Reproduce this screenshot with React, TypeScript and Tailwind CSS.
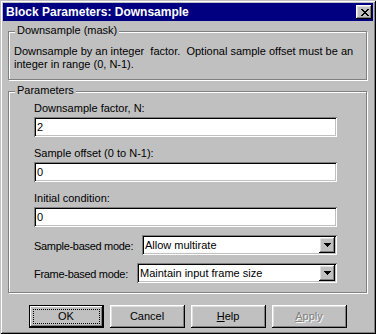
import React from "react";

const sunken =
  "shadow-[inset_1px_1px_0_#808080,inset_-1px_-1px_0_#ffffff,inset_2px_2px_0_#000000,inset_-2px_-2px_0_#c0c0c0]";
const raised =
  "shadow-[inset_-1px_-1px_0_#000000,inset_1px_1px_0_#ffffff,inset_-2px_-2px_0_#808080,inset_2px_2px_0_#dfdfdf]";

function CloseGlyph() {
  const rows = [
    "XX....XX",
    ".XX..XX.",
    "..XXXX..",
    "...XX...",
    "..XXXX..",
    ".XX..XX.",
    "XX....XX",
  ];
  return (
    <svg width="8" height="7" viewBox="0 0 8 7" shapeRendering="crispEdges">
      {rows.map((r, y) =>
        r.split("").map((c, x) =>
          c === "X" ? <rect key={`${x}-${y}`} x={x} y={y} width="1" height="1" fill="#000" /> : null
        )
      )}
    </svg>
  );
}

function Arrow() {
  return (
    <svg width="7" height="4" viewBox="0 0 7 4" shapeRendering="crispEdges">
      <rect x="0" y="0" width="7" height="1" fill="#000" />
      <rect x="1" y="1" width="5" height="1" fill="#000" />
      <rect x="2" y="2" width="3" height="1" fill="#000" />
      <rect x="3" y="3" width="1" height="1" fill="#000" />
    </svg>
  );
}

function Group({
  title,
  className,
  children,
}: {
  title: string;
  className: string;
  children: React.ReactNode;
}) {
  return (
    <div
      className={`relative border border-[#808080] shadow-[inset_1px_1px_0_#ffffff,1px_1px_0_#ffffff] ${className}`}
    >
      <span className="absolute left-[6px] top-[-8px] px-[2px] bg-[#c0c0c0] leading-[13px]">
        {title}
      </span>
      {children}
    </div>
  );
}

function Edit({ value }: { value: string }) {
  return (
    <div className={`h-[20px] bg-white ${sunken} flex items-center pl-[3px]`}>
      <span className="leading-[13px]">{value}</span>
    </div>
  );
}

function Combo({ value }: { value: string }) {
  return (
    <div className={`flex-1 h-[20px] bg-white ${sunken} flex items-center p-[2px]`}>
      <span className="flex-1 pl-[1px] leading-[13px]">{value}</span>
      <div className={`w-[16px] h-[16px] bg-[#c0c0c0] ${raised} flex items-center justify-center`}>
        <Arrow />
      </div>
    </div>
  );
}

function Btn({
  children,
  def,
}: {
  children: React.ReactNode;
  def?: boolean;
}) {
  if (def) {
    return (
      <div className="relative w-[75px] h-[23px] border border-black bg-[#c0c0c0] shadow-[inset_-1px_-1px_0_#000000,inset_1px_1px_0_#ffffff,inset_-2px_-2px_0_#808080] flex items-center justify-center">
        <div className="absolute left-[3px] top-[3px] right-[3px] bottom-[3px] border border-dotted border-black" />
        <span className="leading-[13px]">{children}</span>
      </div>
    );
  }
  return (
    <div className={`w-[75px] h-[23px] bg-[#c0c0c0] ${raised} flex items-center justify-center`}>
      <span className="leading-[13px]">{children}</span>
    </div>
  );
}

export default function App() {
  return (
    <div className="w-[376px] h-[334px] bg-[#c0c0c0] p-[3px] shadow-[inset_1px_1px_0_#c0c0c0,inset_-1px_-1px_0_#000000,inset_2px_2px_0_#ffffff,inset_-2px_-2px_0_#808080] font-['Liberation_Sans',Arial,sans-serif] text-[11px] text-black flex flex-col">
      <div className="h-[18px] bg-[#000080] flex items-center justify-between pl-[3px] pr-[1px]">
        <span className="text-white font-bold text-[12px] leading-[14px]">
          Block Parameters: Downsample
        </span>
        <div className={`w-[16px] h-[14px] bg-[#c0c0c0] ${raised} flex items-center justify-center pl-[1px]`}>
          <CloseGlyph />
        </div>
      </div>

      <div className="flex-1 flex flex-col pl-[5px] pr-[6px] pt-[10px]">
        <Group title="Downsample (mask)" className="h-[49px] pt-[13px] pl-[5px]">
          <p className="leading-[13px] whitespace-pre">
            {"Downsample by an integer  factor.  Optional sample offset must be an"}
            <br />
            {"integer in range (0, N-1)."}
          </p>
        </Group>

        <Group title="Parameters" className="mt-[11px] h-[202px] pt-[10px] pl-[25px] pr-[29px] flex flex-col">
          <div className="leading-[13px]">Downsample factor, N:</div>
          <div className="mt-[2px]">
            <Edit value="2" />
          </div>
          <div className="mt-[10px] leading-[13px]">Sample offset (0 to N-1):</div>
          <div className="mt-[2px]">
            <Edit value="0" />
          </div>
          <div className="mt-[10px] leading-[13px]">Initial condition:</div>
          <div className="mt-[2px]">
            <Edit value="0" />
          </div>
          <div className="mt-[8px] flex items-center">
            <span className="w-[108px] leading-[13px] pt-[2px] tracking-[-0.3px]">Sample-based mode:</span>
            <Combo value="Allow multirate" />
          </div>
          <div className="mt-[8px] flex items-center">
            <span className="w-[103px] leading-[13px] pt-[2px] tracking-[-0.3px]">Frame-based mode:</span>
            <Combo value="Maintain input frame size" />
          </div>
        </Group>

        <div className="mt-[12px] flex justify-center gap-[6px]">
          <Btn def>OK</Btn>
          <Btn>Cancel</Btn>
          <Btn>
            <span className="underline underline-offset-[1px]">H</span>elp
          </Btn>
          <Btn>
            <span className="text-[#808080] [text-shadow:1px_1px_0_#ffffff]">
              <span className="underline underline-offset-[1px]">A</span>pply
            </span>
          </Btn>
        </div>
      </div>
    </div>
  );
}
